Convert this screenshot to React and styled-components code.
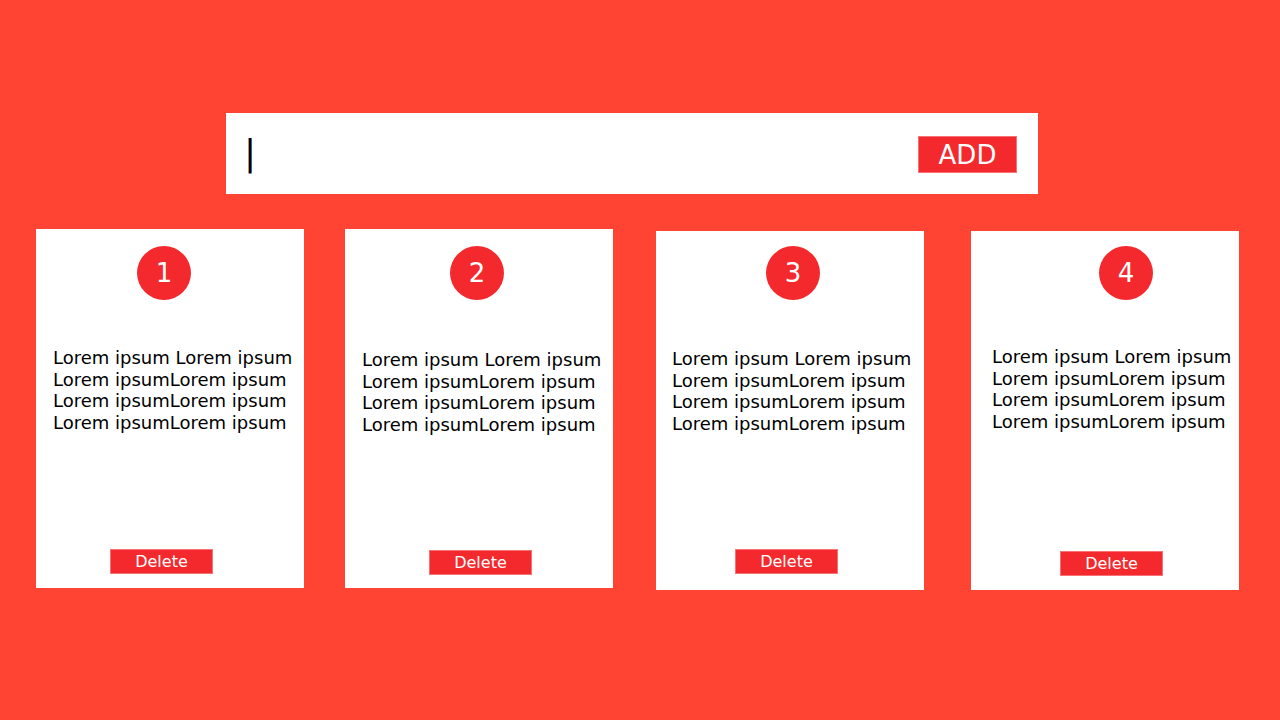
import React from "react";
import styled, { createGlobalStyle } from "styled-components";

const Global = createGlobalStyle`
  html, body { margin: 0; padding: 0; }
  body {
    background: #ff4433;
    font-family: "DejaVu Sans", "Liberation Sans", sans-serif;
  }
`;

const Page = styled.div`
  width: 1280px;
  height: 720px;
  background: #ff4433;
  padding-top: 113px;
  box-sizing: border-box;
  overflow: hidden;
`;

const InputBar = styled.div`
  margin-left: 226px;
  width: 812px;
  height: 81px;
  background: #ffffff;
  display: flex;
  align-items: center;
  justify-content: space-between;
  padding: 0 21px 0 18px;
  box-sizing: border-box;
`;

const Caret = styled.span`
  font-size: 36px;
  line-height: 1;
  color: #000;
  transform: translateY(-1px);
`;

const AddButton = styled.button`
  width: 99px;
  height: 37px;
  background: #f4292d;
  border: 1px solid #f77275;
  color: #fff;
  font-family: "DejaVu Sans", sans-serif;
  font-size: 26px;
  padding: 0;
  margin-top: 2px;
  display: flex;
  align-items: center;
  justify-content: center;
`;

const CardRow = styled.div`
  display: flex;
  align-items: flex-start;
  margin-top: 35px;
  padding-left: 36px;
`;

const Card = styled.div`
  width: 268px;
  height: 359px;
  background: #fff;
  margin-left: ${(p) => p.$ml}px;
  margin-top: ${(p) => p.$mt}px;
  display: flex;
  flex-direction: column;
  align-items: flex-start;
  padding-top: ${(p) => p.$pt}px;
  box-sizing: border-box;
`;

const Badge = styled.div`
  width: 54px;
  height: 54px;
  border-radius: 50%;
  background: #f4292d;
  color: #fff;
  font-size: 26px;
  display: flex;
  align-items: center;
  justify-content: center;
  margin-left: ${(p) => p.$x}px;
`;

const Text = styled.p`
  margin: ${(p) => p.$y}px 0 0 ${(p) => p.$x}px;
  font-size: 18px;
  line-height: 21.6px;
  color: #000;
  width: 250px;
`;

const DeleteButton = styled.button`
  margin-top: auto;
  margin-left: ${(p) => p.$x}px;
  margin-bottom: ${(p) => p.$b}px;
  width: 103px;
  height: 25px;
  background: #f4292d;
  border: 1px solid #f77275;
  color: #fff;
  font-family: "DejaVu Sans", sans-serif;
  font-size: 16px;
  padding: 0;
  display: flex;
  align-items: center;
  justify-content: center;
`;

const cards = [
  { n: 1, ml: 0, mt: 0, pt: 17, cx: 101, tx: 17, ty: 47, dx: 74, db: 14 },
  { n: 2, ml: 41, mt: 0, pt: 17, cx: 105, tx: 17, ty: 49, dx: 84, db: 13 },
  { n: 3, ml: 43, mt: 2, pt: 15, cx: 110, tx: 16, ty: 48, dx: 79, db: 16 },
  { n: 4, ml: 47, mt: 2, pt: 15, cx: 128, tx: 21, ty: 46, dx: 89, db: 14 },
];

export default function App() {
  return (
    <>
      <Global />
      <Page>
        <InputBar>
          <Caret>|</Caret>
          <AddButton>ADD</AddButton>
        </InputBar>
        <CardRow>
          {cards.map((c) => (
            <Card key={c.n} $ml={c.ml} $mt={c.mt} $pt={c.pt}>
              <Badge $x={c.cx}>{c.n}</Badge>
              <Text $x={c.tx} $y={c.ty}>
                Lorem ipsum Lorem ipsum
                <br />
                Lorem ipsumLorem ipsum
                <br />
                Lorem ipsumLorem ipsum
                <br />
                Lorem ipsumLorem ipsum
              </Text>
              <DeleteButton $x={c.dx} $b={c.db}>Delete</DeleteButton>
            </Card>
          ))}
        </CardRow>
      </Page>
    </>
  );
}
